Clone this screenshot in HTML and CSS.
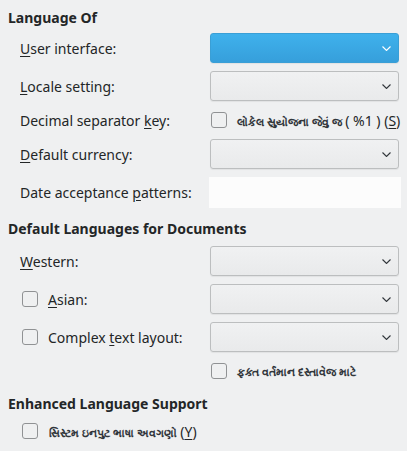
FILE: index.html
```html
<!DOCTYPE html>
<html>
<head>
<meta charset="utf-8">
<link rel="stylesheet" href="styles.css">
</head>
<body>
<div class="page">
  <h2 class="heading h1">Language Of</h2>
  <div class="grid">
    <div class="label"><span><u>U</u>ser interface:</span></div>
    <div class="combo selected"><span class="chev"><svg width="9" height="5" viewBox="0 0 9 5"><path d="M0.5 0.5 L4.5 4.5 L8.5 0.5" fill="none" stroke="#fff" stroke-width="1.1"/></svg></span></div>

    <div class="label"><span><u>L</u>ocale setting:</span></div>
    <div class="combo"><span class="chev"><svg width="9" height="5" viewBox="0 0 9 5"><path d="M0.5 0.5 L4.5 4.5 L8.5 0.5" fill="none" stroke="#31363b" stroke-width="1.1"/></svg></span></div>

    <div class="label short"><span>Decimal separator <u>k</u>ey:</span></div>
    <div class="check-row short"><span class="box"></span><span><span class="guj">લોકેલ સુયોજના જેવું જ</span><span class="lat"> ( %1 ) (<u>S</u>)</span></span></div>

    <div class="label"><span><u>D</u>efault currency:</span></div>
    <div class="combo"><span class="chev"><svg width="9" height="5" viewBox="0 0 9 5"><path d="M0.5 0.5 L4.5 4.5 L8.5 0.5" fill="none" stroke="#31363b" stroke-width="1.1"/></svg></span></div>

    <div class="label"><span>Date acceptance <u>p</u>atterns:</span></div>
    <div class="field"></div>
  </div>

  <h2 class="heading h2">Default Languages for Documents</h2>
  <div class="grid">
    <div class="label"><span><u>W</u>estern:</span></div>
    <div class="combo"><span class="chev"><svg width="9" height="5" viewBox="0 0 9 5"><path d="M0.5 0.5 L4.5 4.5 L8.5 0.5" fill="none" stroke="#31363b" stroke-width="1.1"/></svg></span></div>

    <div class="label cb"><span class="box"></span><span><u>A</u>sian:</span></div>
    <div class="combo"><span class="chev"><svg width="9" height="5" viewBox="0 0 9 5"><path d="M0.5 0.5 L4.5 4.5 L8.5 0.5" fill="none" stroke="#31363b" stroke-width="1.1"/></svg></span></div>

    <div class="label cb"><span class="box"></span><span>Complex <u>t</u>ext layout:</span></div>
    <div class="combo"><span class="chev"><svg width="9" height="5" viewBox="0 0 9 5"><path d="M0.5 0.5 L4.5 4.5 L8.5 0.5" fill="none" stroke="#31363b" stroke-width="1.1"/></svg></span></div>

    <div class="label short"></div>
    <div class="check-row short"><span class="box"></span><span class="guj">ફક્ત વર્તમાન દસ્તાવેજ માટે</span></div>
  </div>

  <h2 class="heading h3">Enhanced Language Support</h2>
  <div class="check-row indent"><span class="box"></span><span><span class="guj">સિસ્ટમ ઇનપુટ ભાષા અવગણો</span><span class="lat"> (<u>Y</u>)</span></span></div>
</div>
</body>
</html>
```
FILE: styles.css
```css
html, body {
  margin: 0;
  padding: 0;
  background: #eff0f1;
}
body {
  font-family: "Noto Sans", "Open Sans", sans-serif;
  font-size: 14px;
  color: #232627;
}
.page {
  padding: 8px 9px 0 8px;
}
u {
  text-decoration-thickness: 1px;
  text-underline-offset: 2px;
}
.heading {
  margin: 0;
  font-size: 14px;
  font-weight: 700;
  line-height: 19px;
  color: #232627;
}
.h1 { margin-bottom: 6px; }
.h2 { margin-top: 11px; margin-bottom: 8px; }
.h3 { margin-top: 12px; margin-bottom: 7px; }
.grid {
  display: grid;
  grid-template-columns: 190px 189px;
  row-gap: 8px;
  margin-left: 12px;
}
.label {
  display: flex;
  align-items: center;
  height: 30px;
  white-space: nowrap;
}
.label.short, .check-row.short { height: 22px; }
.label.cb { gap: 10px; padding-left: 2px; }
.combo {
  position: relative;
  height: 30px;
  box-sizing: border-box;
  border: 1px solid #bcbebf;
  border-radius: 3px;
  background: linear-gradient(#f0f1f2, #e9eaeb);
  box-shadow: 0 1px 1px rgba(0,0,0,0.06);
  display: flex;
  align-items: center;
  justify-content: flex-end;
  padding-right: 7px;
}
.combo.selected {
  border-color: #3a9fd6;
  background: linear-gradient(#3fb1ec, #369fdb);
}
.chev {
  display: flex;
  margin-top: 1px;
}
.field {
  height: 31px;
  background: #fcfcfc;
  margin-left: -1px;
  margin-right: -2px;
}
.check-row {
  display: flex;
  align-items: center;
  white-space: nowrap;
  padding-left: 1px;
}
.box {
  display: inline-block;
  width: 16px;
  height: 16px;
  box-sizing: border-box;
  border: 1px solid #909294;
  border-radius: 3px;
  background: #eff0f1;
  flex: none;
}
.check-row .box { margin-right: 10px; }
.guj {
  font-size: 11px;
  font-weight: 700;
  color: #31363b;
}
.lat { font-size: 14px; white-space: pre; }
.indent {
  margin-left: 14px;
  height: 22px;
  padding-left: 0;
}
.indent .box { margin-right: 11px; }
```
